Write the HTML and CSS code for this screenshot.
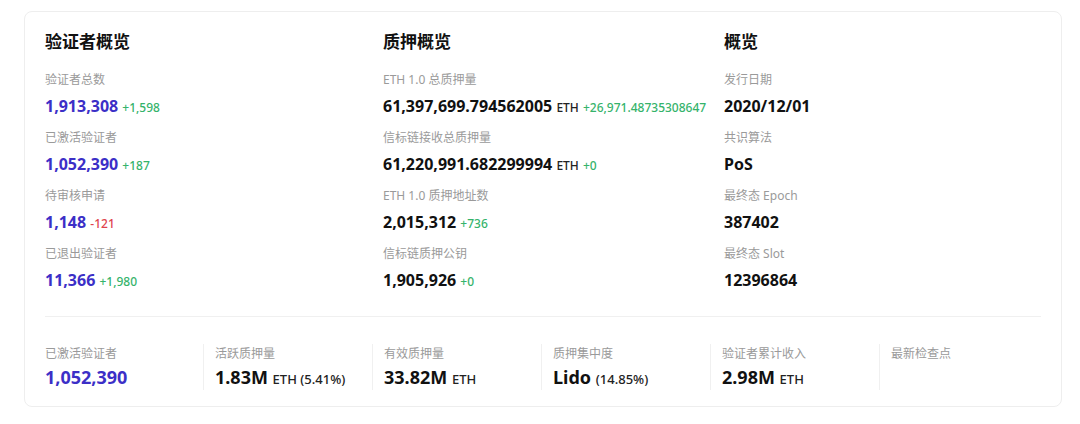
FILE: index.html
```html
<!DOCTYPE html>
<html lang="zh-CN">
<head>
  <meta charset="UTF-8">
  <title>信标链概览</title>
  <link rel="stylesheet" href="styles.css">
</head>
<body>

  <div class="card">
    <div class="overview">
      <div class="col">
        <h2>验证者概览</h2>
        <div class="item">
          <div class="label">验证者总数</div>
          <div class="value purple">1,913,308 <span class="up">+1,598</span></div>
        </div>
        <div class="item">
          <div class="label">已激活验证者</div>
          <div class="value purple">1,052,390 <span class="up">+187</span></div>
        </div>
        <div class="item">
          <div class="label">待审核申请</div>
          <div class="value purple">1,148 <span class="down">-121</span></div>
        </div>
        <div class="item">
          <div class="label">已退出验证者</div>
          <div class="value purple">11,366 <span class="up">+1,980</span></div>
        </div>
      </div>

      <div class="col">
        <h2>质押概览</h2>
        <div class="item">
          <div class="label">ETH 1.0 总质押量</div>
          <div class="value">61,397,699.794562005 <span class="unit">ETH</span> <span class="up">+26,971.48735308647</span></div>
        </div>
        <div class="item">
          <div class="label">信标链接收总质押量</div>
          <div class="value">61,220,991.682299994 <span class="unit">ETH</span> <span class="up">+0</span></div>
        </div>
        <div class="item">
          <div class="label">ETH 1.0 质押地址数</div>
          <div class="value">2,015,312 <span class="up">+736</span></div>
        </div>
        <div class="item">
          <div class="label">信标链质押公钥</div>
          <div class="value">1,905,926 <span class="up">+0</span></div>
        </div>
      </div>

      <div class="col">
        <h2>概览</h2>
        <div class="item">
          <div class="label">发行日期</div>
          <div class="value">2020/12/01</div>
        </div>
        <div class="item">
          <div class="label">共识算法</div>
          <div class="value">PoS</div>
        </div>
        <div class="item">
          <div class="label">最终态 Epoch</div>
          <div class="value">387402</div>
        </div>
        <div class="item">
          <div class="label">最终态 Slot</div>
          <div class="value">12396864</div>
        </div>
      </div>
    </div>

    <div class="stats">
      <div class="stat">
        <div class="label">已激活验证者</div>
        <div class="big purple">1,052,390</div>
      </div>
      <div class="stat">
        <div class="label">活跃质押量</div>
        <div class="big">1.83M <span class="unit">ETH (5.41%)</span></div>
      </div>
      <div class="stat">
        <div class="label">有效质押量</div>
        <div class="big">33.82M <span class="unit">ETH</span></div>
      </div>
      <div class="stat">
        <div class="label">质押集中度</div>
        <div class="big">Lido <span class="unit">(14.85%)</span></div>
      </div>
      <div class="stat">
        <div class="label">验证者累计收入</div>
        <div class="big">2.98M <span class="unit">ETH</span></div>
      </div>
      <div class="stat">
        <div class="label">最新检查点</div>
        <div class="big"></div>
      </div>
    </div>
  </div>

</body>
</html>
```

FILE: styles.css
```css
body {
  font-family: "Noto Sans", "Noto Sans CJK SC", sans-serif;
  background-color: #fff;
  color: #111;
  margin: 0;
  padding: 11px 18px 0 24px;
}

.card {
  border: 1px solid #eeeeee;
  border-radius: 8px;
  padding: 18px 20px 16px 20px;
}

.overview {
  display: grid;
  grid-template-columns: 338px 341px 1fr;
  padding-bottom: 24px;
  border-bottom: 1px solid #f0f0f0;
}

h2 {
  font-size: 17px;
  font-weight: 700;
  line-height: 24px;
  margin: 0 0 16px 0;
}

.item {
  margin-bottom: 10px;
}

.item:last-child {
  margin-bottom: 0;
}

.label {
  font-size: 12px;
  line-height: 20px;
  color: #9a9a9a;
}

.value {
  font-size: 16px;
  font-weight: 700;
  line-height: 24px;
  height: 24px;
  margin-top: 4px;
}

.purple {
  color: #3c2fc7;
}

/* small suffixes sit on the value's baseline without growing the line */
.up,
.down,
.unit {
  font-size: 12px;
  font-weight: 500;
  line-height: 1;
}

.up {
  color: #35b36b;
}

.down {
  color: #e0434d;
}

.unit {
  color: #222;
}

.stats {
  display: grid;
  grid-template-columns: 158px repeat(4, 169px) 1fr;
  margin-top: 27px;
}

.stat {
  padding-left: 11px;
  border-left: 1px solid #f0f0f0;
}

.stat:first-child {
  padding-left: 0;
  border-left: none;
}

.big {
  font-size: 18px;
  font-weight: 700;
  line-height: 26px;
  height: 26px;
}

.big .unit {
  font-size: 13px;
}
```
